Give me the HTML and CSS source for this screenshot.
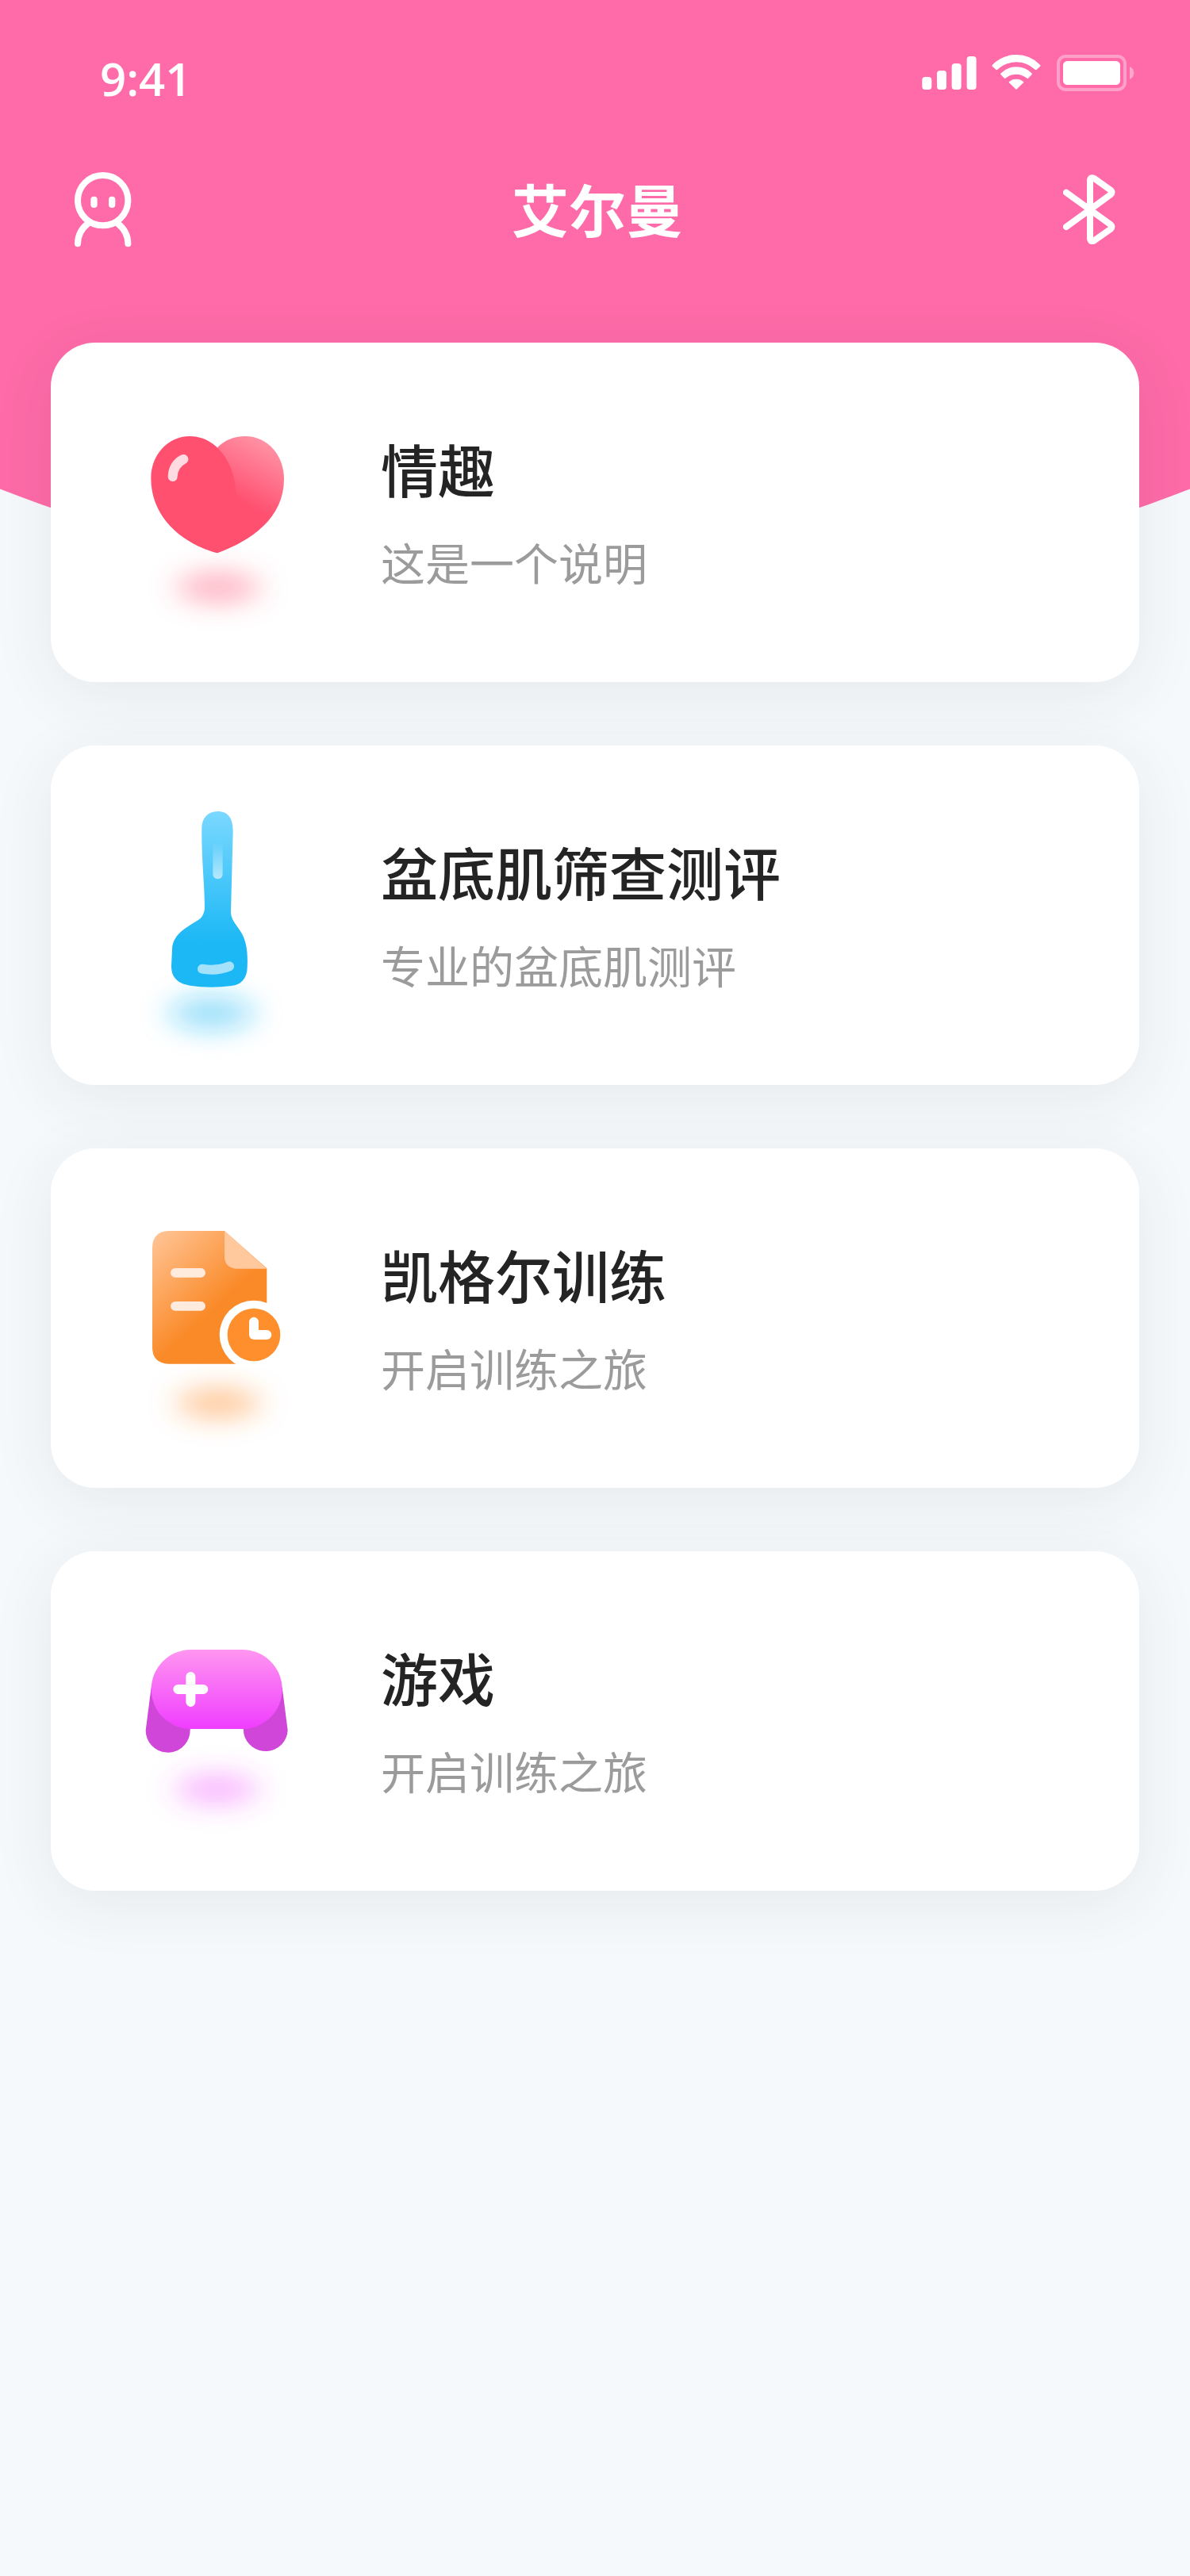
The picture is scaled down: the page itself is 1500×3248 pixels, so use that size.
FILE: index.html
```html
<!DOCTYPE html>
<html lang="zh-CN">
<head>
    <meta charset="UTF-8">
    <meta name="viewport" content="width=device-width, initial-scale=1.0">
    <title>艾尔曼</title>
    <link rel="stylesheet" href="styles.css">
</head>
<body>

<header class="hero">
    <div class="status-bar">
        <span class="time">9:41</span>
        <div class="status-icons">
            <svg class="signal" viewBox="0 0 207 138" fill="#fff" aria-hidden="true">
                <rect x="1" y="84" width="36" height="48" rx="12"/>
                <rect x="57" y="60" width="36" height="72" rx="12"/>
                <rect x="113" y="33" width="36" height="99" rx="12"/>
                <rect x="170" y="6" width="36" height="126" rx="12"/>
            </svg>
            <svg class="wifi" viewBox="0 0 189 138" fill="#fff" aria-hidden="true">
                <path d="M3 38Q40 0 93 0T183 38Q186 41 183 44L170 56Q167 58 164 56Q132 28 93 28T22 56Q19 58 16 56L3 44Q0 41 3 38Z"/>
                <path d="M35 70Q58 46 93 46T151 70Q154 73 151 76L138 89Q135 91 132 88Q115 74 93 74T54 88Q51 91 48 89L35 76Q32 73 35 70Z"/>
                <path d="M93 132L66 106Q64 104 66 102Q77 92 93 92T120 102Q122 104 120 106Z"/>
            </svg>
            <svg class="battery" viewBox="0 0 294 138" aria-hidden="true">
                <rect x="6" y="6" width="252" height="126" rx="28" fill="none" stroke="#fff" stroke-width="12" stroke-opacity=".36"/>
                <rect x="24" y="24" width="216" height="90" rx="16" fill="#fff"/>
                <path d="M276 45Q292 53 292 69T276 93Z" fill="#fff" fill-opacity=".4"/>
            </svg>
        </div>
    </div>
    <nav class="nav">
        <button class="nav-btn" type="button" aria-label="我的">
            <svg class="user-icon" viewBox="0 0 216 285" fill="none" stroke="#fff" stroke-width="24" stroke-linecap="round">
                <circle cx="107" cy="107" r="95"/>
                <path d="M12 271Q12 225 50 195"/>
                <path d="M202 271Q202 225 164 195"/>
                <rect x="61" y="92" width="25" height="43" rx="12" fill="#fff" stroke="none"/>
                <rect x="129" y="92" width="25" height="43" rx="12" fill="#fff" stroke="none"/>
            </svg>
        </button>
        <h1 class="nav-title">艾尔曼</h1>
        <button class="nav-btn" type="button" aria-label="蓝牙">
            <svg class="bluetooth-icon" viewBox="0 0 198 264" fill="none" stroke="#fff" stroke-width="24" stroke-linecap="round" stroke-linejoin="round">
                <path d="M12 68L180 190Q189 198 180 206L118 250Q102 258 102 240V25Q102 7 118 15L180 59Q189 68 180 76L12 198"/>
            </svg>
        </button>
    </nav>
</header>

<main class="card-list">
    <a class="card" href="#">
        <svg class="card-icon" viewBox="0 -204 960 1284" aria-hidden="true">
            <defs>
                <linearGradient id="heart" gradientUnits="userSpaceOnUse" x1="600" y1="160" x2="476" y2="388">
                    <stop offset="0" stop-color="#ff96a8"/>
                    <stop offset="1" stop-color="#ff5070"/>
                </linearGradient>
                <filter id="glow" x="-100%" y="-150%" width="300%" height="400%">
                    <feGaussianBlur stdDeviation="56 46"/>
                </filter>
            </defs>
            <ellipse cx="405" cy="722" rx="156" ry="66" fill="#ff5070" fill-opacity=".38" filter="url(#glow)"/>
            <path d="M403 192C430 165 465 150 507 150C592 150 654 222 654 312C654 460 530 545 401 592L350 400Z" fill="url(#heart)"/>
            <path d="M401 592C280 560 151 465 151 310C151 222 213 150 298 150C400 150 474 254 474 385L585 475C535 527 472 565 401 592Z" fill="#ff5070"/>
            <path d="M233 303Q235 256 274 237" fill="none" stroke="#ffdae1" stroke-width="36" stroke-linecap="round"/>
        </svg>
        <div class="card-text">
            <h2>情趣</h2>
            <p>这是一个说明</p>
        </div>
    </a>

    <a class="card" href="#">
        <svg class="card-icon" viewBox="0 -150 960 1284" aria-hidden="true">
            <defs>
                <linearGradient id="wand" gradientUnits="userSpaceOnUse" x1="400" y1="100" x2="400" y2="590">
                    <stop offset="0" stop-color="#7ad8ff"/>
                    <stop offset="1" stop-color="#1cb8f5"/>
                </linearGradient>
                <linearGradient id="shine" gradientUnits="userSpaceOnUse" x1="400" y1="215" x2="400" y2="355">
                    <stop offset="0" stop-color="#fff" stop-opacity="0"/>
                    <stop offset="1" stop-color="#fff" stop-opacity=".6"/>
                </linearGradient>
            </defs>
            <ellipse cx="380" cy="862" rx="160" ry="70" fill="#1cb8f5" fill-opacity=".4" filter="url(#glow)"/>
            <path d="M403 99C366 99 344 125 343 160C341 270 354 380 354 465C353 480 347 498 333 508C290 537 234 560 231 620L228 685C228 732 258 752 300 758Q375 770 455 759C490 757 515 730 515 690C518 630 512 585 487 549C470 524 453 505 453 480L461 175C461 125 443 99 403 99Z" fill="url(#wand)"/>
            <rect x="385" y="210" width="37" height="145" rx="18" fill="url(#shine)"/>
            <path d="M345 695Q400 704 447 685" fill="none" stroke="#a4e2fc" stroke-width="36" stroke-linecap="round"/>
        </svg>
        <div class="card-text">
            <h2>盆底肌筛查测评</h2>
            <p>专业的盆底肌测评</p>
        </div>
    </a>

    <a class="card" href="#">
        <svg class="card-icon" viewBox="0 -186 960 1284" aria-hidden="true">
            <defs>
                <linearGradient id="paper" gradientUnits="userSpaceOnUse" x1="149" y1="182" x2="380" y2="430">
                    <stop offset="0" stop-color="#ffc08e"/>
                    <stop offset="1" stop-color="#fa8a28"/>
                </linearGradient>
            </defs>
            <ellipse cx="405" cy="777" rx="156" ry="66" fill="#ff8f2c" fill-opacity=".42" filter="url(#glow)"/>
            <path d="M218 126H429L589 268V629H218Q156 626 156 566V188Q158 128 218 126Z" fill="url(#paper)"/>
            <path d="M429 126L589 269H474Q431 266 429 226Z" fill="#ffc89d"/>
            <rect x="225" y="267" width="132" height="35" rx="18" fill="#ffebde"/>
            <rect x="225" y="393" width="132" height="35" rx="18" fill="#ffebde"/>
            <circle cx="540" cy="519" r="130" fill="#fff"/>
            <circle cx="540" cy="519" r="100" fill="#ff8f2c"/>
            <path d="M540 470V519H589" fill="none" stroke="#fff" stroke-width="36" stroke-linecap="round" stroke-linejoin="round"/>
        </svg>
        <div class="card-text">
            <h2>凯格尔训练</h2>
            <p>开启训练之旅</p>
        </div>
    </a>

    <a class="card" href="#">
        <svg class="card-icon" viewBox="0 -252 960 1284" aria-hidden="true">
            <defs>
                <linearGradient id="pad" gradientUnits="userSpaceOnUse" x1="400" y1="120" x2="400" y2="410">
                    <stop offset="0" stop-color="#ff96f0"/>
                    <stop offset="1" stop-color="#f040fe"/>
                </linearGradient>
            </defs>
            <ellipse cx="400" cy="648" rx="156" ry="66" fill="#f040fe" fill-opacity=".34" filter="url(#glow)"/>
            <path d="M152 262L131 425A84 84 0 0 0 298 438L302 380Z" fill="#d046d8"/>
            <path d="M647 262L668 425A84 84 0 0 1 502 438L497 380Z" fill="#d046d8"/>
            <rect x="152" y="120" width="495" height="300" rx="150" fill="url(#pad)"/>
            <path d="M301 222V318M253 270H349" stroke="#fdfdfd" stroke-width="36" stroke-linecap="round"/>
        </svg>
        <div class="card-text">
            <h2>游戏</h2>
            <p>开启训练之旅</p>
        </div>
    </a>
</main>

</body>
</html>
```
FILE: styles.css
```css
* {
    box-sizing: border-box;
}
body {
    font-family: "Noto Sans CJK SC", sans-serif;
    margin: 0;
    padding: 0;
    background-color: #f5f9fc;
    color: #242424;
}
h1, h2, p {
    margin: 0;
}
svg {
    display: block;
}
.hero {
    height: 757px;
    background-color: #fe6ba8;
    color: white;
    clip-path: ellipse(138% 2066px at 50% -1309px); /* curved bottom edge */
}
.status-bar {
    display: flex;
    justify-content: space-between;
    align-items: flex-start;
    padding: 69px 70px 0 126px;
}
.time {
    font-family: "Open Sans", sans-serif;
    font-size: 58px;
    font-weight: 600;
    line-height: 60px;
}
.status-icons {
    display: flex;
    gap: 19px;
}
.status-icons svg {
    height: 46px;
}
.signal {
    width: 69px;
}
.wifi {
    width: 63px;
}
.battery {
    width: 98px;
}
.nav {
    display: flex;
    justify-content: space-between;
    align-items: center;
    padding: 81px 94px 0;
}
.nav-btn {
    display: flex;
    padding: 0;
    border: none;
    background: none;
    cursor: pointer;
}
.user-icon {
    width: 72px;
    height: 95px;
}
.bluetooth-icon {
    width: 66px;
    height: 88px;
}
.nav-title {
    padding-bottom: 4px;
    font-size: 72px;
    font-weight: 700;
    line-height: 104px;
}
.card-list {
    display: flex;
    flex-direction: column;
    gap: 80px;
    margin-top: -325px; /* pulls the cards up over the pink area */
    padding: 0 64px 80px;
}
.card {
    position: relative;
    display: flex;
    align-items: center;
    gap: 20px;
    padding: 0 76px;
    border-radius: 56px;
    background-color: white;
    box-shadow: 0 16px 80px rgba(50, 50, 50, 0.08);
    color: #242424;
    text-decoration: none;
}
.card-icon {
    flex: none;
    width: 320px;
    height: 428px;
}
.card-text {
    display: flex;
    flex-direction: column;
    gap: 26px;
    padding-bottom: 6px;
}
.card-text h2 {
    font-size: 72px;
    font-weight: 500;
    line-height: 104px;
}
.card-text p {
    font-size: 56px;
    line-height: 80px;
    color: #9b9b9b;
}
```
